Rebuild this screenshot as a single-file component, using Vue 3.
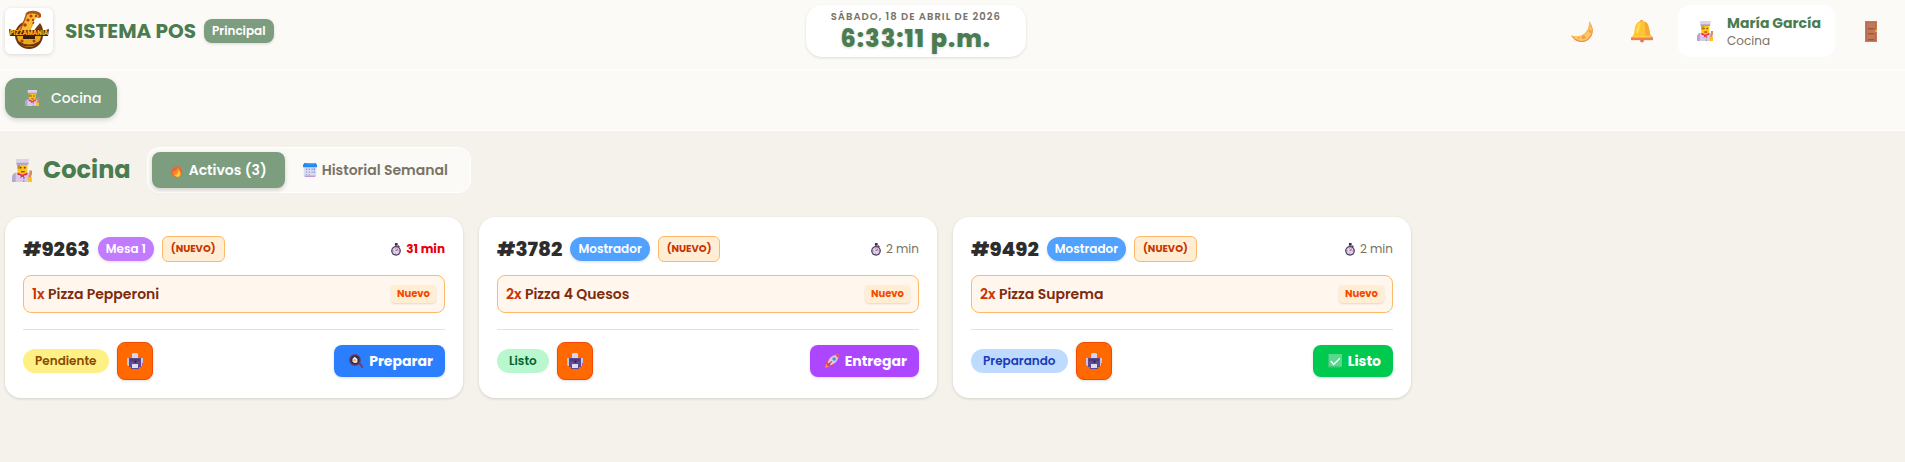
<template>
  <div class="pos">
    <!-- Iconos compartidos -->
    <svg class="sprite" aria-hidden="true">
      <symbol id="ic-chef" viewBox="1 0 22 24" preserveAspectRatio="none">
        <path d="M1 24v-4c0-4 3-6 7-6h8c4 0 6 2 6 6v4z" fill="#d6c9ea" />
        <path d="M1 24v-4c0-3 1-5 4-6v10z" fill="#b9a6cf" />
        <path d="M7 5h11v6c0 4-2 6-5.500 6S7 15 7 11z" fill="#fcc31c" />
        <path d="M7 6h3l-1 5-2-1z" fill="#d48b1c" />
        <path d="M5 1c0-1 2-1 3-1h9c2 0 3 0 3 1l-1 5H6z" fill="#dcd3e8" />
        <path d="M6 4h13v2H6z" fill="#aaa0bf" />
        <circle cx="10.500" cy="9" r="1" fill="#5b3828" />
        <circle cx="15" cy="9" r="1" fill="#5b3828" />
        <path d="M11 12.500h4v1.500h-4z" fill="#b03c35" />
        <path d="M7 14l5.500 2.500L18 14v2.500l-4 1 1 2.500-2.500-1.500L10 20l1-2.500-4-1z" fill="#df2f56" />
        <circle cx="14" cy="20" r=".8" fill="#86749f" />
        <circle cx="14" cy="23" r=".8" fill="#86749f" />
        <path d="M20 12h3v4l-1 2v5h-3v-5l1-2z" fill="#d88c65" />
        <path d="M18 19h5v5h-4z" fill="#fcc31c" />
      </symbol>
      <symbol id="ic-moon" viewBox="0 0 24 24">
        <path d="M19 1c5 7 5 15-1 19.500C12 25 4 23 0 16c9 3 19-1 19-15z" fill="#fbb653" />
        <path d="M0 16c6 6 14 6 19 0 4-4 3-10 0-15 5 7 5 15-1 19.500C12 25 4 23 0 16z" fill="#e78e4c" />
        <path d="M2 17c9 2 19-3 18-13 4 9 0 15-5 17C10 23 5 21 2 17z" fill="#ffc866" />
        <circle cx="13" cy="18" r="2" fill="#eea04c" />
        <circle cx="20" cy="12" r="1.500" fill="#eea04c" />
        <circle cx="8" cy="19" r="1" fill="#eea04c" />
      </symbol>
      <symbol id="ic-bell" viewBox="0 0 24 24">
        <circle cx="11.500" cy="2" r="2" fill="#e98b32" />
        <circle cx="12" cy="22.500" r="2" fill="#d8754d" />
        <path d="M12 1c6 0 7 4 8 9l1 6 3 4H0l3-4 1-6c1-5 2-9 8-9z" fill="#ffc235" />
        <path d="M15 2c4 1 4 5 5 9l1 5 3 4h-8z" fill="#f8a835" />
        <path d="M6 9c1-4 2-6 5-6L8 15H5z" fill="#ffdc50" />
        <path d="M0 19h24v3H0z" fill="#e88254" />
        <path d="M2 17h20v2H2z" fill="#ffcd3c" />
      </symbol>
      <symbol id="ic-door" viewBox="0 0 12 21">
        <path d="M0 0h12v21H0z" fill="#c87b56" />
        <path d="M1 1h10v19H1z" fill="#b56a4e" />
        <path d="M2 2h8v6H2zM2 9h8v4H2zM2 14h8v5H2z" fill="#c4785a" />
        <path d="M3 7h6v1H3zM3 12h6v1H3zM3 18h6v1H3z" fill="#9b5643" />
        <circle cx="11" cy="10" r="1" fill="#ffc341" />
      </symbol>
      <symbol id="ic-fire" viewBox="0 0 16 20">
        <path d="M9 0c-1 5 4 5 5 9 3 6 1 11-6 11S-1 15 1 10c1-2 2-3 3-6l1 4c3-2 4-4 4-8z" fill="#f0622f" />
        <path d="M9 4c0 4 4 5 4 10 0 8-11 7-11 1 0-2 1-3 2-5l1 2c3-2 4-4 4-8z" fill="#fb8530" />
        <path d="M10 10c3 3 3 4 3 6 0 5-8 5-8 0l2 1c1-2 3-3 3-7z" fill="#ffcc37" />
      </symbol>
      <symbol id="ic-calendar" viewBox="0 0 20 20">
        <path d="M1 5h18v13c0 1-1 2-2 2H3c-1 0-2-1-2-2z" fill="#dedcf4" />
        <path d="M2 0h16l2 2v4H0V3z" fill="#2388f4" />
        <path d="M5 0h12v2H5z" fill="#40adff" />
        <path d="M4 8h2v2H4zM8 8h2v2H8zM12 8h2v2h-2zM4 12h2v2H4zM8 12h2v2H8zM12 12h2v2h-2zM4 16h2v1H4zM8 16h2v1H8z" fill="#9b9fbd" />
        <path d="M15 8h2v2h-2zM15 12h2v2h-2z" fill="#3898ef" />
        <path d="M2 18h16l-1 2H3z" fill="#bd98dc" />
      </symbol>
      <symbol id="ic-watch" viewBox="0 0 18 24">
        <path d="M7 0h5v5H7zM13 4l3 2-1 2-3-2z" fill="#3f2f58" />
        <circle cx="9" cy="14.500" r="9" fill="#493b62" />
        <circle cx="9" cy="14.500" r="6.600" fill="#dcd3e6" />
        <path d="M8 9h1v2H8zM3 14h2v1H3zM12 14h2v1h-2zM8 18h1v2H8z" fill="#817491" />
        <path d="M8 14l4-4 1 1-4 4z" fill="#e42f5d" />
      </symbol>
      <symbol id="ic-printer" viewBox="0 0 16 16">
        <path d="M5 1l1-1h4l1 1v5H5z" fill="#d8d5e8" />
        <path d="M0 5h16v7l-1 1H1l-1-1z" fill="#c9c5dc" />
        <path d="M2 5h12v9H2z" fill="#5f4993" />
        <path d="M3 6h10v2H3z" fill="#4d3b79" />
        <path d="M7 8h3L8.500 10z" fill="#271d42" />
        <path d="M4 11h8v5H4z" fill="#5f4993" />
        <path d="M5 11h6v4H5z" fill="#e0dcee" />
        <path d="M15 10h1v3h-1z" fill="#ec467f" />
      </symbol>
      <symbol id="ic-pan" viewBox="0 0 20 20">
        <path d="M13 13l2-2 5 6v3h-2z" fill="#69456f" />
        <circle cx="8.500" cy="8.500" r="8.500" fill="#674075" />
        <circle cx="8.500" cy="8.500" r="6.500" fill="#352c42" />
        <path d="M5 7l3-3 4 3v5l-4 1-3-2z" fill="#f7f0f4" />
        <circle cx="8" cy="9" r="1.800" fill="#ffa637" />
      </symbol>
      <symbol id="ic-rocket" viewBox="0 0 20 20">
        <path d="M2 10l6-4 6 6-3 6-3-1-3-4-4 1z" fill="#ef416b" />
        <path d="M0 20l2-6 4 4z" fill="#ff8c38" />
        <path d="M4 12C6 5 11 1 20 0c-1 9-5 14-12 16z" fill="#d8cbe2" />
        <path d="M14 1l6-1-1 6z" fill="#ef416b" />
        <circle cx="13" cy="7" r="2.500" fill="#4e95c9" />
        <path d="M3 16l6-6 1 1-5 6z" fill="#dc2f65" />
      </symbol>
      <symbol id="ic-check" viewBox="0 0 20 20">
        <path d="M0 0h20v20H0z" fill="#55d98a" />
        <path d="M0 18h20v2H0zM0 0h1v20H0z" fill="#38b96d" />
        <path d="M4 10l4 5 9-9" fill="none" stroke="#fff" stroke-width="2" />
      </symbol>
    </svg>

    <header class="topbar">
      <div class="brand">
        <div class="logo">
          <svg viewBox="0 0 42 42" role="img" aria-label="Pizzamania">
            <circle cx="21" cy="25" r="14" fill="#6c3310" />
            <circle cx="21" cy="25" r="12" fill="#e9a91f" />
            <path d="M22 21l6-12h9v12z" fill="#fff" />
            <path d="M26 21c1-3 4-5 6-8 2 3 3 5 3 8z" fill="#773616" />
            <path d="M18 3c3-3 12-3 15 1v3l-2 1-3-1c-3 3-4 6-5 10l-2 4h-9c0-4 4-10 6-18z" fill="#ab5618" />
            <path d="M19 5c4-2 8-2 12 1-5 3-7 7-8 12l-2 3h-8c1-5 4-9 6-16z" fill="#f6bd33" />
            <circle cx="23" cy="6" r="1.600" fill="#c23814" />
            <circle cx="20" cy="10" r="1.600" fill="#c23814" />
            <circle cx="17" cy="15" r="1.800" fill="#c23814" />
            <circle cx="25" cy="10" r="1.200" fill="#c23814" />
            <circle cx="28" cy="6" r="1.200" fill="#c23814" />
            <path d="M1 19l3 1h34l3-1-1 7H2z" fill="#452109" />
            <text x="21" y="25" text-anchor="middle" font-size="6" font-weight="800" fill="#f9ae20">PIZZAMANIA</text>
            <path d="M15 26h12v3H15z" fill="#332010" />
            <circle cx="14" cy="31" r="1.500" fill="#b83b12" />
            <circle cx="26" cy="31" r="1.500" fill="#b83b12" />
            <path d="M10 32q11 7 22 0" fill="none" stroke="#6c3310" stroke-width="2" />
          </svg>
        </div>
        <h1 class="brand-name">SISTEMA POS</h1>
        <span class="branch">Principal</span>
      </div>

      <div class="clock">
        <span class="clock-date">SÁBADO, 18 DE ABRIL DE 2026</span>
        <time class="clock-time">6:33:11 p.m.</time>
      </div>

      <div class="actions">
        <button class="icon-btn" type="button" aria-label="Cambiar tema">
          <svg width="23" height="23"><use href="#ic-moon" /></svg>
        </button>
        <button class="icon-btn" type="button" aria-label="Notificaciones">
          <svg width="22" height="24"><use href="#ic-bell" /></svg>
        </button>
        <div class="user">
          <svg width="16" height="20"><use href="#ic-chef" /></svg>
          <div class="user-info">
            <span class="user-name">María García</span>
            <span class="user-role">Cocina</span>
          </div>
        </div>
        <button class="icon-btn" type="button" aria-label="Cerrar sesión">
          <svg width="12" height="21"><use href="#ic-door" /></svg>
        </button>
      </div>
    </header>

    <nav class="modules">
      <a href="#cocina" class="module">
        <svg width="14" height="16"><use href="#ic-chef" /></svg>
        Cocina
      </a>
    </nav>

    <main class="kitchen">
      <div class="kitchen-head">
        <h2 class="kitchen-title">
          <svg width="20" height="23"><use href="#ic-chef" /></svg>
          Cocina
        </h2>
        <div class="tabs">
          <button
            v-for="t in tabs"
            :key="t.key"
            type="button"
            :class="['tab', { active: tab === t.key }]"
            @click="tab = t.key"
          >
            <svg width="14" height="14"><use :href="`#ic-${t.icon}`" /></svg>
            {{ t.label }}
          </button>
        </div>
      </div>

      <section class="orders">
        <article v-for="o in orders" :key="o.id" class="order">
          <div class="order-head">
            <h3 class="order-id">#{{ o.id }}</h3>
            <span :class="['place', o.placeType]">{{ o.place }}</span>
            <span class="new-flag">(NUEVO)</span>
            <span :class="['elapsed', { late: o.minutes > 30 }]">
              <svg width="10" height="13"><use href="#ic-watch" /></svg>
              {{ o.minutes }} min
            </span>
          </div>
          <div class="item">
            <span class="item-name"><b>{{ o.qty }}x</b> {{ o.item }}</span>
            <span class="item-new">Nuevo</span>
          </div>
          <div class="order-foot">
            <span :class="['status', o.status]">{{ o.statusLabel }}</span>
            <button class="print" type="button" aria-label="Imprimir comanda">
              <svg width="16" height="16"><use href="#ic-printer" /></svg>
            </button>
            <button :class="['advance', o.status]" type="button">
              <svg width="14" height="14"><use :href="`#ic-${o.icon}`" /></svg>
              {{ o.action }}
            </button>
          </div>
        </article>
      </section>
    </main>
  </div>
</template>

<script setup>
import { ref } from 'vue'

const tab = ref('activos')

const tabs = [
  { key: 'activos', label: 'Activos (3)', icon: 'fire' },
  { key: 'historial', label: 'Historial Semanal', icon: 'calendar' },
]

const orders = [
  { id: 9263, place: 'Mesa 1', placeType: 'mesa', minutes: 31, qty: 1, item: 'Pizza Pepperoni', status: 'pendiente', statusLabel: 'Pendiente', action: 'Preparar', icon: 'pan' },
  { id: 3782, place: 'Mostrador', placeType: 'mostrador', minutes: 2, qty: 2, item: 'Pizza 4 Quesos', status: 'listo', statusLabel: 'Listo', action: 'Entregar', icon: 'rocket' },
  { id: 9492, place: 'Mostrador', placeType: 'mostrador', minutes: 2, qty: 2, item: 'Pizza Suprema', status: 'preparando', statusLabel: 'Preparando', action: 'Listo', icon: 'check' },
]
</script>

<style>
body {
  margin: 0;
  background: #f5f2eb;
}
</style>

<style scoped>
.pos {
  min-height: 100vh;
  background: #f5f2eb;
  color: #2d2d2d;
  font-family: Poppins, Inter, sans-serif;
  font-size: 14px;
  line-height: 20px;
}
.pos * { box-sizing: border-box; }
.sprite {
  position: absolute;
  width: 0;
  height: 0;
}
svg { flex: none; }
h1, h2, h3 { margin: 0; }
button {
  border: none;
  font: inherit;
  cursor: pointer;
}

/* ── Barra superior ── */
.topbar {
  display: flex;
  align-items: center;
  justify-content: space-between;
  padding: 5px 10px 12px 5px;
  background: #fcfaf6;
  border-bottom: 1px solid #fff;
}
.brand {
  display: flex;
  align-items: center;
}
.logo {
  display: grid;
  place-items: center;
  width: 48px;
  height: 46px;
  margin-right: 12px;
  background: #fff;
  border-radius: 6px;
  box-shadow: 0 1px 4px rgba(0, 0, 0, 0.14);
}
.logo svg {
  width: 42px;
  height: 42px;
}
.brand-name {
  margin-right: 8px;
  color: #4a7c50;
  font-size: 20px;
  font-weight: 700;
  line-height: 28px;
}
.branch {
  padding: 4px 8px;
  background: #7c9e7f;
  border-radius: 8px;
  color: #fff;
  font-size: 12px;
  font-weight: 600;
  line-height: 16px;
  box-shadow: 0 1px 3px rgba(0, 0, 0, 0.14);
}
.clock {
  display: flex;
  flex-direction: column;
  align-items: center;
  padding: 4px 25px;
  background: #fff;
  border-radius: 16px;
  box-shadow: 0 1px 3px rgba(0, 0, 0, 0.12);
}
.clock-date {
  color: #787366;
  font-size: 10px;
  font-weight: 600;
  letter-spacing: 1px;
  line-height: 16px;
}
.clock-time {
  color: #4a7c50;
  font-size: 24px;
  font-weight: 800;
  letter-spacing: 1px;
  line-height: 28px;
  text-shadow: 0 1px 3px rgba(0, 0, 0, 0.16);
}
.actions {
  display: flex;
  align-items: center;
  gap: 12px;
}
.icon-btn {
  display: grid;
  place-items: center;
  width: 48px;
  height: 44px;
  padding: 0;
  background: none;
  border-radius: 12px;
}
.user {
  display: flex;
  align-items: center;
  gap: 14px;
  padding: 8px 14px 8px 19px;
  background: #fff;
  border-radius: 12px;
}
.user-info {
  display: flex;
  flex-direction: column;
}
.user-name {
  color: #4a7c50;
  font-size: 14px;
  font-weight: 700;
  line-height: 20px;
}
.user-role {
  color: #787366;
  font-size: 12px;
  line-height: 16px;
}

/* ── Módulos ── */
.modules {
  display: flex;
  padding: 8px 5px 12px;
  background: #fcfaf6;
  border-bottom: 1px solid #fff;
}
.module {
  display: flex;
  align-items: center;
  gap: 12px;
  padding: 10px 16px 10px 20px;
  background: #7c9e7f;
  border-radius: 12px;
  color: #fff;
  font-weight: 500;
  text-decoration: none;
  box-shadow: 0 2px 5px rgba(0, 0, 0, 0.16);
}

/* ── Cocina ── */
.kitchen { padding: 16px 20px 16px 5px; }
.kitchen-head {
  display: flex;
  align-items: center;
  gap: 16px;
  margin-bottom: 24px;
}
.kitchen-title {
  display: flex;
  align-items: center;
  gap: 11px;
  padding-left: 7px;
  color: #4a7c50;
  font-size: 24px;
  font-weight: 700;
  line-height: 32px;
}
.tabs {
  display: flex;
  padding: 4px;
  background: #fcfaf6;
  border: 1px solid #fff;
  border-radius: 12px;
}
.tab {
  display: flex;
  align-items: center;
  gap: 5px;
  padding: 8px 18px;
  background: none;
  border-radius: 8px;
  color: #787366;
  font-weight: 600;
}
.tab.active {
  background: #7c9e7f;
  color: #fff;
  box-shadow: 0 2px 5px rgba(0, 0, 0, 0.18);
}

/* ── Tarjetas de pedido ── */
.orders {
  display: grid;
  grid-template-columns: repeat(4, 1fr);
  gap: 16px;
}
.order {
  padding: 18px;
  background: #fff;
  border-radius: 16px;
  box-shadow: 0 1px 3px rgba(0, 0, 0, 0.14);
}
.order-head {
  display: flex;
  align-items: center;
  gap: 8px;
  margin-bottom: 12px;
}
.order-id {
  font-size: 20px;
  font-weight: 800;
  line-height: 28px;
}
.place {
  padding: 4px 8px;
  border-radius: 12px;
  color: #fff;
  font-size: 12px;
  font-weight: 600;
  line-height: 16px;
  box-shadow: 0 1px 3px rgba(0, 0, 0, 0.14);
}
.place.mesa { background: #c27aff; }
.place.mostrador { background: #51a2ff; }
.new-flag {
  padding: 4px 8px;
  background: #ffedd4;
  border: 1px solid #ffb86a;
  border-radius: 6px;
  color: #ca3500;
  font-size: 10px;
  font-weight: 700;
  line-height: 16px;
}
.elapsed {
  display: flex;
  align-items: center;
  gap: 5px;
  margin-left: auto;
  color: #787366;
  font-size: 12px;
  line-height: 16px;
}
.elapsed.late {
  color: #e7000b;
  font-weight: 700;
}
.item {
  display: flex;
  align-items: center;
  justify-content: space-between;
  padding: 8px;
  background: #fff6ed;
  border: 1px solid #ffb86a;
  border-radius: 8px;
}
.item-name {
  color: #7e2a0c;
  font-weight: 600;
}
.item-name b {
  color: #ca3500;
  font-weight: 600;
}
.item-new {
  padding: 1px 6px;
  background: #ffedd4;
  border-radius: 4px;
  color: #f54900;
  font-size: 10px;
  font-weight: 700;
  line-height: 16px;
  box-shadow: 0 1px 2px rgba(0, 0, 0, 0.12);
}
.order-foot {
  display: flex;
  align-items: center;
  gap: 8px;
  margin-top: 16px;
  padding-top: 12px;
  border-top: 1px solid #e5e3d9;
}
.status {
  padding: 4px 12px;
  border-radius: 12px;
  font-size: 12px;
  font-weight: 600;
  line-height: 16px;
}
.status.pendiente { background: #fff085; color: #894b00; }
.status.listo { background: #b9f8cf; color: #016630; }
.status.preparando { background: #bedbff; color: #193cb8; }
.print {
  display: grid;
  place-items: center;
  width: 36px;
  height: 38px;
  padding: 0;
  background: #ff6900;
  border: 1px solid #f54900;
  border-radius: 8px;
  box-shadow: 0 1px 3px rgba(0, 0, 0, 0.14);
}
.advance {
  display: flex;
  align-items: center;
  gap: 6px;
  margin-left: auto;
  padding: 6px 12px 6px 15px;
  border-radius: 8px;
  color: #fff;
  font-weight: 700;
  box-shadow: 0 1px 3px rgba(0, 0, 0, 0.14);
}
.advance.pendiente { background: #2b7fff; }
.advance.listo { background: #ad46ff; }
.advance.preparando { background: #00c950; }
</style>
